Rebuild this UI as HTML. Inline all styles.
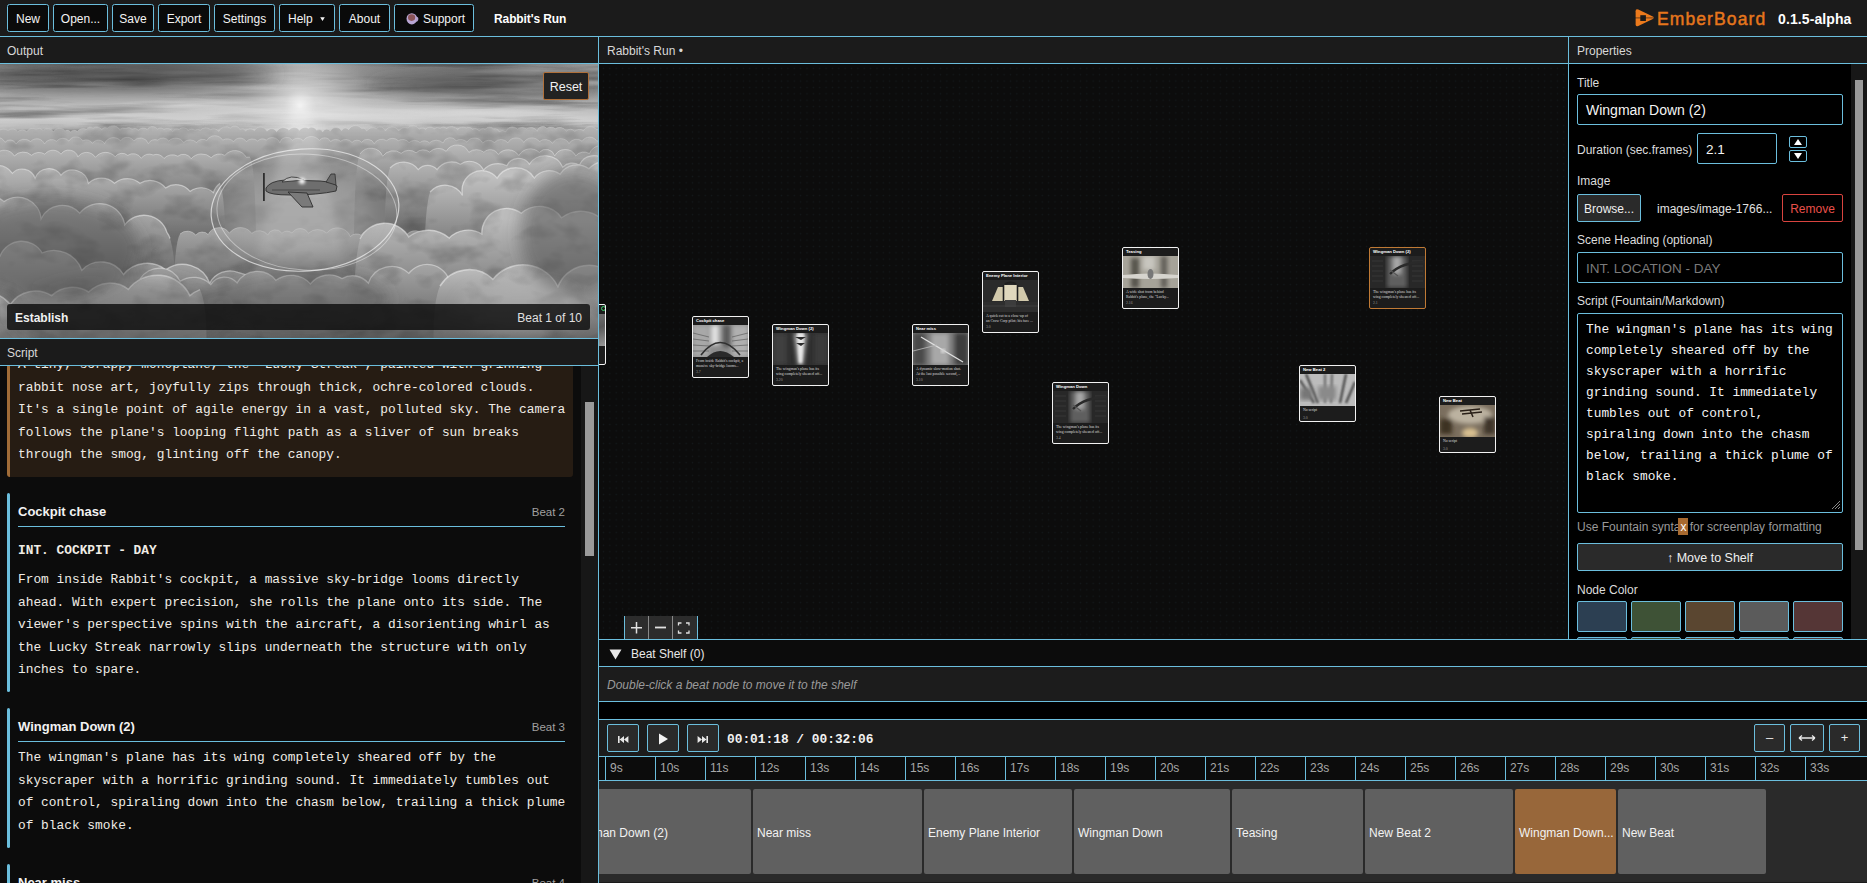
<!DOCTYPE html>
<html><head><meta charset="utf-8">
<style>
*{box-sizing:border-box;margin:0;padding:0}
html,body{width:1867px;height:883px;overflow:hidden;background:#1b1b1b;font-family:"Liberation Sans",sans-serif;color:#e8e8e8}
.a{position:absolute}
.bl{background:#6bbedd}
.mono{font-family:"Liberation Mono",monospace}
/* toolbar */
.tb{left:0;top:0;width:1867px;height:36px;background:#1b1b1b}
.btn{position:absolute;top:4px;height:28px;border:1px solid #6bbedd;border-radius:2.5px;background:#0a0a0a;color:#f4f4f4;font-size:12px;line-height:28px;text-align:center;white-space:nowrap}
.hdr{position:absolute;background:#1b1b1b;color:#d8d8d8;font-size:12px}
.st{font-size:12.85px;line-height:22.5px;white-space:pre;color:#f0ece6}
.ct{font-size:13px;font-weight:bold;color:#f2f2f2;white-space:nowrap}
.cb{font-size:11.5px;color:#a0a0a0;text-align:right}
.pl{font-size:12px;color:#dcdcdc;white-space:nowrap}
.inp{border:1px solid #6bbedd;border-radius:2px;background:#000;padding-left:8px;white-space:nowrap}
.spin{width:18px;border:1px solid #6bbedd;border-radius:2px;background:#000}
.pbtn{border:1px solid #6bbedd;border-radius:2px;background:#2a2a2a;color:#f0f0f0;font-size:12.5px;text-align:center;white-space:nowrap}
.sw{width:50px;height:31px;border:1px solid #6bbedd;border-radius:2px}
.tbtn{width:32px;height:28px;border:1px solid #6bbedd;border-radius:2px;background:#2a2a2a;overflow:hidden}
.tbtn svg{position:absolute;left:0;top:0}
.rl{position:absolute;top:4px;font-size:12px;color:#a8a8a8;white-space:nowrap}
.clip{top:8px;height:85px;background:#606060;border-radius:2px;color:#f2f2f2;font-size:12px;line-height:89px;padding-left:4px;white-space:nowrap;overflow:hidden}
.nd{width:57px;border:1px solid #f2f2f2;border-radius:2px;background:#1c1c1c;overflow:hidden}
.ndt{left:3px;top:0px;font-size:4.2px;font-weight:bold;color:#fff;white-space:nowrap;line-height:8px}
.ndi{left:0;width:55px}
.ndx{left:3px;font-size:3.8px;line-height:5px;color:#ddd;white-space:nowrap;font-family:"Liberation Serif",serif}
</style></head><body>
<!-- toolbar -->
<div class="a tb">
  <div class="btn" style="left:7px;width:42px">New</div>
  <div class="btn" style="left:53px;width:55px">Open...</div>
  <div class="btn" style="left:112px;width:42px">Save</div>
  <div class="btn" style="left:158px;width:52px">Export</div>
  <div class="btn" style="left:214px;width:61px">Settings</div>
  <div class="btn" style="left:279px;width:56px;text-align:left;padding-left:8px">Help <svg style="position:absolute;left:39px;top:11px" width="7" height="6"><path d="M1.2 1.2H5.8L3.5 5Z" fill="#f4f4f4"/></svg></div>
  <div class="btn" style="left:339px;width:51px">About</div>
  <div class="btn" style="left:394px;width:80px;text-align:left;padding-left:28px">Support
   <svg style="position:absolute;left:11px;top:7px" width="13" height="13" viewBox="0 0 13 13"><path d="M9.5 5.5 Q12.5 5 11.5 8 Q10.8 9.5 9 9" stroke="#b9a6d4" stroke-width="1.3" fill="none"/><ellipse cx="5.8" cy="6.8" rx="5.3" ry="5.6" fill="#b9a6d4"/><ellipse cx="5.6" cy="5.6" rx="3.6" ry="3.3" fill="#8a5458"/></svg></div>
  <div class="a" style="left:494px;top:12px;font-size:12px;letter-spacing:-0.1px;font-weight:bold;color:#fff;white-space:nowrap">Rabbit's Run</div>
  <svg class="a" style="left:1634px;top:8px" width="22" height="21" viewBox="0 0 22 21">
   <path d="M1.6 3.2 Q1.6 0.4 4.3 1.6 L18.8 8.4 Q21 9.6 18.8 10.9 L4.3 17.9 Q1.6 19.2 1.6 16.3Z" fill="#ec7a1c"/>
   <rect x="6.3" y="7.2" width="5.6" height="5.8" fill="#1b1b1b"/>
   <rect x="1" y="9.4" width="20" height="1" fill="#1b1b1b" fill-opacity="0.6"/>
  </svg>
  <div class="a" style="left:1657px;top:9px;font-size:17.5px;letter-spacing:1.1px;-webkit-text-stroke:0.45px #e6761c;color:#e6761c;white-space:nowrap">EmberBoard</div>
  <div class="a" style="left:1778px;top:11px;font-size:14px;letter-spacing:0.1px;font-weight:bold;color:#fff;white-space:nowrap">0.1.5-alpha</div>
</div>
<div class="a bl" style="left:0;top:36px;width:1867px;height:1px"></div>

<!-- left panel -->
<div class="hdr" style="left:0;top:37px;width:598px;height:26px"><span class="a" style="left:7px;top:7px">Output</span></div>
<div class="a bl" style="left:0;top:63px;width:598px;height:1px"></div>
<div class="a" id="outimg" style="left:0;top:64px;width:598px;height:274px;background:#8e8e8e;overflow:hidden">
<svg class="a" style="left:0;top:0" width="598" height="274" viewBox="0 0 598 274">
 <defs>
  <filter id="b8" x="-50%" y="-50%" width="200%" height="200%"><feGaussianBlur stdDeviation="8"/></filter>
  <filter id="b4" x="-50%" y="-50%" width="200%" height="200%"><feGaussianBlur stdDeviation="4"/></filter>
  <filter id="b2" x="-50%" y="-50%" width="200%" height="200%"><feGaussianBlur stdDeviation="1.4"/></filter>
  <filter id="b05" x="-5%" y="-5%" width="110%" height="110%"><feGaussianBlur stdDeviation="0.5"/></filter>
  <filter id="turbH" x="0" y="0" width="100%" height="100%">
   <feTurbulence type="fractalNoise" baseFrequency="0.006 0.09" numOctaves="4" seed="11" result="n"/>
   <feColorMatrix in="n" type="matrix" values="0 0 0 0 0  0 0 0 0 0  0 0 0 0 0  2.2 0 0 0 -1.0"/>
  </filter>
  <filter id="turbL" x="0" y="0" width="100%" height="100%">
   <feTurbulence type="fractalNoise" baseFrequency="0.006 0.09" numOctaves="3" seed="4" result="n"/>
   <feColorMatrix in="n" type="matrix" values="0 0 0 0 1  0 0 0 0 1  0 0 0 0 1  2.2 0 0 0 -1.05"/>
  </filter>
  <filter id="turbP" x="0" y="0" width="100%" height="100%">
   <feTurbulence type="fractalNoise" baseFrequency="0.03 0.05" numOctaves="3" seed="9" result="n"/>
   <feColorMatrix in="n" type="matrix" values="0 0 0 0 0  0 0 0 0 0  0 0 0 0 0  2.0 0 0 0 -0.95"/>
  </filter>
  <radialGradient id="sun" cx="300" cy="42" r="160" gradientUnits="userSpaceOnUse">
   <stop offset="0" stop-color="#ffffff" stop-opacity="0.95"/><stop offset="0.1" stop-color="#eeeeee" stop-opacity="0.7"/><stop offset="0.45" stop-color="#d0d0d0" stop-opacity="0.25"/><stop offset="1" stop-color="#a0a0a0" stop-opacity="0"/>
  </radialGradient>
  <linearGradient id="sky" x1="0" y1="0" x2="0" y2="1">
   <stop offset="0" stop-color="#7a7a7a"/><stop offset="0.1" stop-color="#969696"/><stop offset="0.15" stop-color="#b6b6b6"/><stop offset="0.2" stop-color="#cccccc"/><stop offset="0.24" stop-color="#b4b4b4"/><stop offset="0.4" stop-color="#a4a4a4"/><stop offset="1" stop-color="#8a8a8a"/>
  </linearGradient>
  <linearGradient id="ray" x1="0" y1="0" x2="0" y2="1">
   <stop offset="0" stop-color="#ffffff" stop-opacity="0.25"/><stop offset="1" stop-color="#ffffff" stop-opacity="0"/>
  </linearGradient>
  <clipPath id="topc"><rect x="0" y="0" width="598" height="110"/></clipPath>
  <linearGradient id="cg1" gradientUnits="userSpaceOnUse" x1="0" y1="61.2" x2="0" y2="86.0"><stop offset="0" stop-color="#b6b6b6"/><stop offset="1" stop-color="#989898"/></linearGradient>
<linearGradient id="cg2" gradientUnits="userSpaceOnUse" x1="0" y1="72.0" x2="0" y2="102.0"><stop offset="0" stop-color="#b4b4b4"/><stop offset="1" stop-color="#909090"/></linearGradient>
<linearGradient id="cg3" gradientUnits="userSpaceOnUse" x1="0" y1="83.6" x2="0" y2="132.0"><stop offset="0" stop-color="#b8b8b8"/><stop offset="1" stop-color="#7c7c7c"/></linearGradient>
<linearGradient id="cg4" gradientUnits="userSpaceOnUse" x1="0" y1="81.6" x2="0" y2="130.0"><stop offset="0" stop-color="#b8b8b8"/><stop offset="1" stop-color="#7c7c7c"/></linearGradient>
<linearGradient id="cg5" gradientUnits="userSpaceOnUse" x1="0" y1="100.0" x2="0" y2="172.0"><stop offset="0" stop-color="#bcbcbc"/><stop offset="1" stop-color="#6e6e6e"/></linearGradient>
<linearGradient id="cg6" gradientUnits="userSpaceOnUse" x1="0" y1="92.0" x2="0" y2="164.0"><stop offset="0" stop-color="#bcbcbc"/><stop offset="1" stop-color="#6e6e6e"/></linearGradient>
<linearGradient id="cg7" gradientUnits="userSpaceOnUse" x1="0" y1="161.6" x2="0" y2="210.0"><stop offset="0" stop-color="#a8a8a8"/><stop offset="1" stop-color="#767676"/></linearGradient>
<linearGradient id="cg8" gradientUnits="userSpaceOnUse" x1="0" y1="124.4" x2="0" y2="220.0"><stop offset="0" stop-color="#c0c0c0"/><stop offset="1" stop-color="#626262"/></linearGradient>
<linearGradient id="cg9" gradientUnits="userSpaceOnUse" x1="0" y1="112.4" x2="0" y2="208.0"><stop offset="0" stop-color="#c0c0c0"/><stop offset="1" stop-color="#626262"/></linearGradient>
<linearGradient id="cg10" gradientUnits="userSpaceOnUse" x1="0" y1="164.6" x2="0" y2="285.0"><stop offset="0" stop-color="#bcbcbc"/><stop offset="1" stop-color="#555555"/></linearGradient>
<linearGradient id="cg11" gradientUnits="userSpaceOnUse" x1="0" y1="154.6" x2="0" y2="275.0"><stop offset="0" stop-color="#bcbcbc"/><stop offset="1" stop-color="#585858"/></linearGradient>
<linearGradient id="cg12" gradientUnits="userSpaceOnUse" x1="0" y1="199.4" x2="0" y2="275.0"><stop offset="0" stop-color="#a6a6a6"/><stop offset="1" stop-color="#5e5e5e"/></linearGradient>
<linearGradient id="cg13" gradientUnits="userSpaceOnUse" x1="0" y1="211.0" x2="0" y2="295.0"><stop offset="0" stop-color="#bdbdbd"/><stop offset="1" stop-color="#5a5a5a"/></linearGradient>
<linearGradient id="cg14" gradientUnits="userSpaceOnUse" x1="0" y1="198.0" x2="0" y2="282.0"><stop offset="0" stop-color="#c4c4c4"/><stop offset="1" stop-color="#5e5e5e"/></linearGradient>
 </defs>
 <rect width="598" height="274" fill="url(#sky)"/>
 <g filter="url(#b8)">
  <ellipse cx="130" cy="6" rx="170" ry="14" fill="#626262"/>
  <ellipse cx="470" cy="18" rx="140" ry="12" fill="#686868"/>
 </g>
 <g clip-path="url(#topc)">
  <rect width="598" height="110" filter="url(#turbH)" opacity="0.45"/>
  <rect width="598" height="110" filter="url(#turbL)" opacity="0.4"/>
 </g>
 <rect width="598" height="274" fill="url(#sun)"/>
 <g filter="url(#b05)">
 <path d="M-26.0 290.0 Q-28.0 72.0 -20.0 66.0 A6.3 6.3 0 0 1 -10.1 67.3 A5.1 5.1 0 0 1 -2.0 67.6 A7.6 7.6 0 0 1 8.1 66.6 A6.5 6.5 0 0 1 17.8 67.9 A6.1 6.1 0 0 1 26.8 67.8 A6.5 6.5 0 0 1 35.8 65.2 A6.0 6.0 0 0 1 43.2 66.4 A6.9 6.9 0 0 1 53.3 67.4 A7.7 7.7 0 0 1 65.1 66.7 A4.5 4.5 0 0 1 70.6 67.9 A5.1 5.1 0 0 1 77.4 67.6 A7.0 7.0 0 0 1 86.3 65.3 A5.0 5.0 0 0 1 93.1 64.0 A6.1 6.1 0 0 1 101.6 65.6 A4.7 4.7 0 0 1 107.6 64.1 A7.5 7.5 0 0 1 119.9 66.2 A4.5 4.5 0 0 1 125.7 64.5 A5.3 5.3 0 0 1 132.2 65.1 A4.8 4.8 0 0 1 138.5 66.6 A5.8 5.8 0 0 1 147.2 65.4 A6.2 6.2 0 0 1 157.5 65.2 A4.3 4.3 0 0 1 163.8 65.5 A7.1 7.1 0 0 1 172.9 67.5 A4.1 4.1 0 0 1 179.1 65.8 A5.3 5.3 0 0 1 188.2 66.8 A4.7 4.7 0 0 1 195.1 66.4 A4.1 4.1 0 0 1 200.3 66.4 A6.9 6.9 0 0 1 210.5 65.7 A6.0 6.0 0 0 1 218.7 67.5 A7.8 7.8 0 0 1 230.4 64.1 A5.6 5.6 0 0 1 239.8 65.3 A4.4 4.4 0 0 1 245.6 66.8 A6.5 6.5 0 0 1 254.5 66.5 A7.0 7.0 0 0 1 267.0 67.3 A5.7 5.7 0 0 1 276.7 67.7 A7.5 7.5 0 0 1 289.0 66.3 A6.0 6.0 0 0 1 299.4 66.5 A6.9 6.9 0 0 1 308.6 64.4 A5.1 5.1 0 0 1 316.5 66.3 A4.8 4.8 0 0 1 322.8 67.8 A4.3 4.3 0 0 1 330.3 67.1 A6.3 6.3 0 0 1 341.6 66.7 A4.1 4.1 0 0 1 348.7 65.7 A7.7 7.7 0 0 1 361.6 64.6 A4.2 4.2 0 0 1 366.7 67.1 A7.2 7.2 0 0 1 376.3 64.5 A5.5 5.5 0 0 1 385.4 67.0 A7.5 7.5 0 0 1 398.7 67.0 A7.3 7.3 0 0 1 407.6 64.0 A7.4 7.4 0 0 1 419.3 65.3 A4.5 4.5 0 0 1 425.6 65.4 A6.0 6.0 0 0 1 434.4 64.8 A4.3 4.3 0 0 1 440.2 64.5 A4.4 4.4 0 0 1 446.5 64.5 A7.2 7.2 0 0 1 457.5 65.8 A6.6 6.6 0 0 1 466.3 64.1 A4.3 4.3 0 0 1 472.4 65.4 A5.0 5.0 0 0 1 479.3 67.3 A4.0 4.0 0 0 1 485.2 65.5 A5.1 5.1 0 0 1 493.6 64.9 A4.2 4.2 0 0 1 499.0 67.9 A5.4 5.4 0 0 1 505.9 67.9 A6.6 6.6 0 0 1 517.5 65.3 A7.2 7.2 0 0 1 526.4 65.0 A7.2 7.2 0 0 1 537.2 67.2 A5.5 5.5 0 0 1 546.8 64.3 A6.5 6.5 0 0 1 555.3 64.8 A7.5 7.5 0 0 1 566.3 67.3 A5.1 5.1 0 0 1 574.7 67.6 A6.5 6.5 0 0 1 583.5 66.7 A7.8 7.8 0 0 1 596.6 65.8 A5.6 5.6 0 0 1 603.6 67.1 A4.6 4.6 0 0 1 609.8 64.1 A4.7 4.7 0 0 1 616.4 65.9 A4.7 4.7 0 0 1 620.0 67.0 Q628.0 73.0 626.0 290.0 Z" fill="url(#cg1)"/><path d="M-20.0 66.0 A6.3 6.3 0 0 1 -10.1 67.3 A5.1 5.1 0 0 1 -2.0 67.6 A7.6 7.6 0 0 1 8.1 66.6 A6.5 6.5 0 0 1 17.8 67.9 A6.1 6.1 0 0 1 26.8 67.8 A6.5 6.5 0 0 1 35.8 65.2 A6.0 6.0 0 0 1 43.2 66.4 A6.9 6.9 0 0 1 53.3 67.4 A7.7 7.7 0 0 1 65.1 66.7 A4.5 4.5 0 0 1 70.6 67.9 A5.1 5.1 0 0 1 77.4 67.6 A7.0 7.0 0 0 1 86.3 65.3 A5.0 5.0 0 0 1 93.1 64.0 A6.1 6.1 0 0 1 101.6 65.6 A4.7 4.7 0 0 1 107.6 64.1 A7.5 7.5 0 0 1 119.9 66.2 A4.5 4.5 0 0 1 125.7 64.5 A5.3 5.3 0 0 1 132.2 65.1 A4.8 4.8 0 0 1 138.5 66.6 A5.8 5.8 0 0 1 147.2 65.4 A6.2 6.2 0 0 1 157.5 65.2 A4.3 4.3 0 0 1 163.8 65.5 A7.1 7.1 0 0 1 172.9 67.5 A4.1 4.1 0 0 1 179.1 65.8 A5.3 5.3 0 0 1 188.2 66.8 A4.7 4.7 0 0 1 195.1 66.4 A4.1 4.1 0 0 1 200.3 66.4 A6.9 6.9 0 0 1 210.5 65.7 A6.0 6.0 0 0 1 218.7 67.5 A7.8 7.8 0 0 1 230.4 64.1 A5.6 5.6 0 0 1 239.8 65.3 A4.4 4.4 0 0 1 245.6 66.8 A6.5 6.5 0 0 1 254.5 66.5 A7.0 7.0 0 0 1 267.0 67.3 A5.7 5.7 0 0 1 276.7 67.7 A7.5 7.5 0 0 1 289.0 66.3 A6.0 6.0 0 0 1 299.4 66.5 A6.9 6.9 0 0 1 308.6 64.4 A5.1 5.1 0 0 1 316.5 66.3 A4.8 4.8 0 0 1 322.8 67.8 A4.3 4.3 0 0 1 330.3 67.1 A6.3 6.3 0 0 1 341.6 66.7 A4.1 4.1 0 0 1 348.7 65.7 A7.7 7.7 0 0 1 361.6 64.6 A4.2 4.2 0 0 1 366.7 67.1 A7.2 7.2 0 0 1 376.3 64.5 A5.5 5.5 0 0 1 385.4 67.0 A7.5 7.5 0 0 1 398.7 67.0 A7.3 7.3 0 0 1 407.6 64.0 A7.4 7.4 0 0 1 419.3 65.3 A4.5 4.5 0 0 1 425.6 65.4 A6.0 6.0 0 0 1 434.4 64.8 A4.3 4.3 0 0 1 440.2 64.5 A4.4 4.4 0 0 1 446.5 64.5 A7.2 7.2 0 0 1 457.5 65.8 A6.6 6.6 0 0 1 466.3 64.1 A4.3 4.3 0 0 1 472.4 65.4 A5.0 5.0 0 0 1 479.3 67.3 A4.0 4.0 0 0 1 485.2 65.5 A5.1 5.1 0 0 1 493.6 64.9 A4.2 4.2 0 0 1 499.0 67.9 A5.4 5.4 0 0 1 505.9 67.9 A6.6 6.6 0 0 1 517.5 65.3 A7.2 7.2 0 0 1 526.4 65.0 A7.2 7.2 0 0 1 537.2 67.2 A5.5 5.5 0 0 1 546.8 64.3 A6.5 6.5 0 0 1 555.3 64.8 A7.5 7.5 0 0 1 566.3 67.3 A5.1 5.1 0 0 1 574.7 67.6 A6.5 6.5 0 0 1 583.5 66.7 A7.8 7.8 0 0 1 596.6 65.8 A5.6 5.6 0 0 1 603.6 67.1 A4.6 4.6 0 0 1 609.8 64.1 A4.7 4.7 0 0 1 616.4 65.9 A4.7 4.7 0 0 1 620.0 67.0 " fill="none" stroke="#f2f2f2" stroke-opacity="0.25" stroke-width="0.8"/>
<path d="M-26.0 290.0 Q-28.0 85.2 -20.0 78.0 A6.4 6.4 0 0 1 -11.8 78.1 A9.6 9.6 0 0 1 5.0 78.3 A6.4 6.4 0 0 1 16.0 80.0 A9.6 9.6 0 0 1 30.6 77.5 A8.3 8.3 0 0 1 44.5 80.0 A8.0 8.0 0 0 1 56.5 77.2 A8.2 8.2 0 0 1 69.0 77.1 A7.8 7.8 0 0 1 82.7 76.9 A7.0 7.0 0 0 1 92.4 79.4 A7.2 7.2 0 0 1 104.6 79.7 A9.5 9.5 0 0 1 120.6 76.8 A7.8 7.8 0 0 1 133.8 77.0 A8.4 8.4 0 0 1 148.3 79.7 A7.4 7.4 0 0 1 157.7 76.1 A7.3 7.3 0 0 1 168.8 77.1 A9.3 9.3 0 0 1 183.6 78.5 A9.3 9.3 0 0 1 196.6 78.6 A7.4 7.4 0 0 1 206.8 76.5 A9.2 9.2 0 0 1 222.7 76.1 A8.9 8.9 0 0 1 233.7 77.7 A7.3 7.3 0 0 1 246.3 77.7 A8.0 8.0 0 0 1 257.7 77.0 A7.0 7.0 0 0 1 266.3 76.1 A8.2 8.2 0 0 1 279.8 78.7 A7.0 7.0 0 0 1 292.4 76.3 A7.7 7.7 0 0 1 303.3 76.7 A9.8 9.8 0 0 1 319.3 76.5 A6.7 6.7 0 0 1 330.6 77.5 A7.2 7.2 0 0 1 340.5 77.3 A8.4 8.4 0 0 1 352.1 78.4 A6.3 6.3 0 0 1 361.6 78.3 A7.3 7.3 0 0 1 374.2 79.7 A8.6 8.6 0 0 1 386.6 76.7 A8.5 8.5 0 0 1 398.3 76.7 A8.1 8.1 0 0 1 409.0 78.6 A9.0 9.0 0 0 1 420.0 78.5 A6.8 6.8 0 0 1 429.4 78.9 A9.9 9.9 0 0 1 443.1 79.0 A7.4 7.4 0 0 1 456.2 76.7 A8.7 8.7 0 0 1 467.0 78.2 A9.0 9.0 0 0 1 482.7 79.1 A8.2 8.2 0 0 1 494.5 78.5 A8.6 8.6 0 0 1 507.9 78.9 A9.0 9.0 0 0 1 523.8 78.5 A9.5 9.5 0 0 1 539.4 77.5 A9.2 9.2 0 0 1 552.5 79.3 A9.5 9.5 0 0 1 569.0 79.6 A8.8 8.8 0 0 1 582.2 77.2 A8.6 8.6 0 0 1 597.0 77.4 A6.8 6.8 0 0 1 608.3 79.6 A6.8 6.8 0 0 1 617.1 76.4 A8.2 8.2 0 0 1 620.0 77.0 Q628.0 84.2 626.0 290.0 Z" fill="url(#cg2)"/><path d="M-20.0 78.0 A6.4 6.4 0 0 1 -11.8 78.1 A9.6 9.6 0 0 1 5.0 78.3 A6.4 6.4 0 0 1 16.0 80.0 A9.6 9.6 0 0 1 30.6 77.5 A8.3 8.3 0 0 1 44.5 80.0 A8.0 8.0 0 0 1 56.5 77.2 A8.2 8.2 0 0 1 69.0 77.1 A7.8 7.8 0 0 1 82.7 76.9 A7.0 7.0 0 0 1 92.4 79.4 A7.2 7.2 0 0 1 104.6 79.7 A9.5 9.5 0 0 1 120.6 76.8 A7.8 7.8 0 0 1 133.8 77.0 A8.4 8.4 0 0 1 148.3 79.7 A7.4 7.4 0 0 1 157.7 76.1 A7.3 7.3 0 0 1 168.8 77.1 A9.3 9.3 0 0 1 183.6 78.5 A9.3 9.3 0 0 1 196.6 78.6 A7.4 7.4 0 0 1 206.8 76.5 A9.2 9.2 0 0 1 222.7 76.1 A8.9 8.9 0 0 1 233.7 77.7 A7.3 7.3 0 0 1 246.3 77.7 A8.0 8.0 0 0 1 257.7 77.0 A7.0 7.0 0 0 1 266.3 76.1 A8.2 8.2 0 0 1 279.8 78.7 A7.0 7.0 0 0 1 292.4 76.3 A7.7 7.7 0 0 1 303.3 76.7 A9.8 9.8 0 0 1 319.3 76.5 A6.7 6.7 0 0 1 330.6 77.5 A7.2 7.2 0 0 1 340.5 77.3 A8.4 8.4 0 0 1 352.1 78.4 A6.3 6.3 0 0 1 361.6 78.3 A7.3 7.3 0 0 1 374.2 79.7 A8.6 8.6 0 0 1 386.6 76.7 A8.5 8.5 0 0 1 398.3 76.7 A8.1 8.1 0 0 1 409.0 78.6 A9.0 9.0 0 0 1 420.0 78.5 A6.8 6.8 0 0 1 429.4 78.9 A9.9 9.9 0 0 1 443.1 79.0 A7.4 7.4 0 0 1 456.2 76.7 A8.7 8.7 0 0 1 467.0 78.2 A9.0 9.0 0 0 1 482.7 79.1 A8.2 8.2 0 0 1 494.5 78.5 A8.6 8.6 0 0 1 507.9 78.9 A9.0 9.0 0 0 1 523.8 78.5 A9.5 9.5 0 0 1 539.4 77.5 A9.2 9.2 0 0 1 552.5 79.3 A9.5 9.5 0 0 1 569.0 79.6 A8.8 8.8 0 0 1 582.2 77.2 A8.6 8.6 0 0 1 597.0 77.4 A6.8 6.8 0 0 1 608.3 79.6 A6.8 6.8 0 0 1 617.1 76.4 A8.2 8.2 0 0 1 620.0 77.0 " fill="none" stroke="#f2f2f2" stroke-opacity="0.30" stroke-width="0.9"/>
<path d="M-26.0 290.0 Q-28.0 104.0 -20.0 92.0 A12.7 12.7 0 0 1 -4.3 90.3 A11.3 11.3 0 0 1 14.3 92.0 A12.1 12.1 0 0 1 31.5 91.3 A11.1 11.1 0 0 1 44.9 90.2 A10.1 10.1 0 0 1 61.0 90.2 A9.5 9.5 0 0 1 77.9 92.9 A10.5 10.5 0 0 1 95.4 93.3 A12.9 12.9 0 0 1 115.2 92.7 A8.6 8.6 0 0 1 127.7 91.4 A9.5 9.5 0 0 1 141.3 94.3 A9.3 9.3 0 0 1 153.1 91.0 A9.0 9.0 0 0 1 164.0 94.5 A11.3 11.3 0 0 1 177.8 92.2 A9.0 9.0 0 0 1 191.2 94.7 A13.9 13.9 0 0 1 211.2 93.7 A11.0 11.0 0 0 1 224.9 91.4 A12.9 12.9 0 0 1 246.3 93.3 A13.9 13.9 0 0 1 250.0 93.2 Q258.0 105.2 256.0 290.0 Z" fill="url(#cg3)"/><path d="M-20.0 92.0 A12.7 12.7 0 0 1 -4.3 90.3 A11.3 11.3 0 0 1 14.3 92.0 A12.1 12.1 0 0 1 31.5 91.3 A11.1 11.1 0 0 1 44.9 90.2 A10.1 10.1 0 0 1 61.0 90.2 A9.5 9.5 0 0 1 77.9 92.9 A10.5 10.5 0 0 1 95.4 93.3 A12.9 12.9 0 0 1 115.2 92.7 A8.6 8.6 0 0 1 127.7 91.4 A9.5 9.5 0 0 1 141.3 94.3 A9.3 9.3 0 0 1 153.1 91.0 A9.0 9.0 0 0 1 164.0 94.5 A11.3 11.3 0 0 1 177.8 92.2 A9.0 9.0 0 0 1 191.2 94.7 A13.9 13.9 0 0 1 211.2 93.7 A11.0 11.0 0 0 1 224.9 91.4 A12.9 12.9 0 0 1 246.3 93.3 A13.9 13.9 0 0 1 250.0 93.2 " fill="none" stroke="#f2f2f2" stroke-opacity="0.40" stroke-width="1.0"/>
<path d="M354.0 290.0 Q352.0 102.0 360.0 90.0 A12.9 12.9 0 0 1 382.7 92.2 A13.2 13.2 0 0 1 401.2 89.3 A11.7 11.7 0 0 1 416.1 88.8 A10.2 10.2 0 0 1 429.7 88.1 A11.9 11.9 0 0 1 446.2 87.3 A12.8 12.8 0 0 1 468.8 88.3 A12.1 12.1 0 0 1 483.9 88.3 A9.0 9.0 0 0 1 498.2 90.4 A12.9 12.9 0 0 1 518.8 91.5 A13.2 13.2 0 0 1 539.3 88.4 A9.0 9.0 0 0 1 554.7 91.9 A11.9 11.9 0 0 1 575.8 91.9 A10.4 10.4 0 0 1 589.4 89.6 A13.5 13.5 0 0 1 612.8 87.0 A8.0 8.0 0 0 1 620.0 92.5 Q628.0 104.5 626.0 290.0 Z" fill="url(#cg4)"/><path d="M360.0 90.0 A12.9 12.9 0 0 1 382.7 92.2 A13.2 13.2 0 0 1 401.2 89.3 A11.7 11.7 0 0 1 416.1 88.8 A10.2 10.2 0 0 1 429.7 88.1 A11.9 11.9 0 0 1 446.2 87.3 A12.8 12.8 0 0 1 468.8 88.3 A12.1 12.1 0 0 1 483.9 88.3 A9.0 9.0 0 0 1 498.2 90.4 A12.9 12.9 0 0 1 518.8 91.5 A13.2 13.2 0 0 1 539.3 88.4 A9.0 9.0 0 0 1 554.7 91.9 A11.9 11.9 0 0 1 575.8 91.9 A10.4 10.4 0 0 1 589.4 89.6 A13.5 13.5 0 0 1 612.8 87.0 A8.0 8.0 0 0 1 620.0 92.5 " fill="none" stroke="#f2f2f2" stroke-opacity="0.40" stroke-width="1.0"/>
<path d="M-26.0 290.0 Q-28.0 130.0 -20.0 112.0 A19.0 19.0 0 0 1 12.4 109.3 A13.6 13.6 0 0 1 35.1 114.2 A14.6 14.6 0 0 1 61.0 111.2 A15.9 15.9 0 0 1 88.4 119.4 A19.1 19.1 0 0 1 114.5 119.3 A19.8 19.8 0 0 1 139.9 119.3 A19.9 19.9 0 0 1 165.7 124.0 A18.0 18.0 0 0 1 190.1 127.4 A18.2 18.2 0 0 1 213.4 128.6 A19.1 19.1 0 0 1 220.0 119.3 Q228.0 137.3 226.0 290.0 Z" fill="url(#cg5)"/><path d="M-20.0 112.0 A19.0 19.0 0 0 1 12.4 109.3 A13.6 13.6 0 0 1 35.1 114.2 A14.6 14.6 0 0 1 61.0 111.2 A15.9 15.9 0 0 1 88.4 119.4 A19.1 19.1 0 0 1 114.5 119.3 A19.8 19.8 0 0 1 139.9 119.3 A19.9 19.9 0 0 1 165.7 124.0 A18.0 18.0 0 0 1 190.1 127.4 A18.2 18.2 0 0 1 213.4 128.6 A19.1 19.1 0 0 1 220.0 119.3 " fill="none" stroke="#f2f2f2" stroke-opacity="0.50" stroke-width="1.2"/>
<path d="M384.0 290.0 Q382.0 122.0 390.0 104.0 A18.3 18.3 0 0 1 418.3 105.6 A12.6 12.6 0 0 1 437.1 105.7 A17.8 17.8 0 0 1 460.4 100.2 A15.6 15.6 0 0 1 483.5 106.1 A19.5 19.5 0 0 1 506.8 101.7 A13.1 13.1 0 0 1 529.4 100.1 A19.2 19.2 0 0 1 562.8 103.2 A13.4 13.4 0 0 1 579.4 101.0 A15.7 15.7 0 0 1 605.6 97.0 A15.3 15.3 0 0 1 620.0 95.8 Q628.0 113.8 626.0 290.0 Z" fill="url(#cg6)"/><path d="M390.0 104.0 A18.3 18.3 0 0 1 418.3 105.6 A12.6 12.6 0 0 1 437.1 105.7 A17.8 17.8 0 0 1 460.4 100.2 A15.6 15.6 0 0 1 483.5 106.1 A19.5 19.5 0 0 1 506.8 101.7 A13.1 13.1 0 0 1 529.4 100.1 A19.2 19.2 0 0 1 562.8 103.2 A13.4 13.4 0 0 1 579.4 101.0 A15.7 15.7 0 0 1 605.6 97.0 A15.3 15.3 0 0 1 620.0 95.8 " fill="none" stroke="#f2f2f2" stroke-opacity="0.50" stroke-width="1.2"/>
<path d="M174.0 290.0 Q172.0 182.0 180.0 170.0 A11.0 11.0 0 0 1 195.8 171.0 A8.4 8.4 0 0 1 208.2 170.5 A12.1 12.1 0 0 1 229.3 169.2 A13.8 13.8 0 0 1 251.7 169.3 A11.4 11.4 0 0 1 267.8 170.9 A8.1 8.1 0 0 1 281.9 169.2 A8.1 8.1 0 0 1 292.0 169.0 A9.6 9.6 0 0 1 308.4 169.3 A13.5 13.5 0 0 1 326.8 169.1 A13.7 13.7 0 0 1 350.3 172.6 A8.7 8.7 0 0 1 361.1 171.2 A10.0 10.0 0 0 1 373.8 167.6 A9.9 9.9 0 0 1 387.5 171.0 A13.9 13.9 0 0 1 405.7 171.8 A11.6 11.6 0 0 1 425.6 173.0 A13.5 13.5 0 0 1 440.0 171.4 Q448.0 183.4 446.0 290.0 Z" fill="url(#cg7)"/><path d="M180.0 170.0 A11.0 11.0 0 0 1 195.8 171.0 A8.4 8.4 0 0 1 208.2 170.5 A12.1 12.1 0 0 1 229.3 169.2 A13.8 13.8 0 0 1 251.7 169.3 A11.4 11.4 0 0 1 267.8 170.9 A8.1 8.1 0 0 1 281.9 169.2 A8.1 8.1 0 0 1 292.0 169.0 A9.6 9.6 0 0 1 308.4 169.3 A13.5 13.5 0 0 1 326.8 169.1 A13.7 13.7 0 0 1 350.3 172.6 A8.7 8.7 0 0 1 361.1 171.2 A10.0 10.0 0 0 1 373.8 167.6 A9.9 9.9 0 0 1 387.5 171.0 A13.9 13.9 0 0 1 405.7 171.8 A11.6 11.6 0 0 1 425.6 173.0 A13.5 13.5 0 0 1 440.0 171.4 " fill="none" stroke="#f2f2f2" stroke-opacity="0.35" stroke-width="1.0"/>
<path d="M-36.0 290.0 Q-38.0 164.0 -30.0 140.0 A23.7 23.7 0 0 1 3.9 137.6 A23.6 23.6 0 0 1 41.1 154.8 A23.6 23.6 0 0 1 79.8 149.2 A25.4 25.4 0 0 1 124.8 160.9 A23.9 23.9 0 0 1 166.9 168.4 A19.4 19.4 0 0 1 170.0 174.5 Q178.0 198.5 176.0 290.0 Z" fill="url(#cg8)"/><path d="M-30.0 140.0 A23.7 23.7 0 0 1 3.9 137.6 A23.6 23.6 0 0 1 41.1 154.8 A23.6 23.6 0 0 1 79.8 149.2 A25.4 25.4 0 0 1 124.8 160.9 A23.9 23.9 0 0 1 166.9 168.4 A19.4 19.4 0 0 1 170.0 174.5 " fill="none" stroke="#f2f2f2" stroke-opacity="0.55" stroke-width="1.3"/>
<path d="M424.0 290.0 Q422.0 152.0 430.0 128.0 A20.1 20.1 0 0 1 462.6 131.4 A19.7 19.7 0 0 1 497.1 114.2 A21.9 21.9 0 0 1 534.3 114.0 A18.8 18.8 0 0 1 560.1 110.2 A19.9 19.9 0 0 1 588.9 104.8 A22.0 22.0 0 0 1 618.2 101.6 A20.7 20.7 0 0 1 630.0 100.4 Q638.0 124.4 636.0 290.0 Z" fill="url(#cg9)"/><path d="M430.0 128.0 A20.1 20.1 0 0 1 462.6 131.4 A19.7 19.7 0 0 1 497.1 114.2 A21.9 21.9 0 0 1 534.3 114.0 A18.8 18.8 0 0 1 560.1 110.2 A19.9 19.9 0 0 1 588.9 104.8 A22.0 22.0 0 0 1 618.2 101.6 A20.7 20.7 0 0 1 630.0 100.4 " fill="none" stroke="#f2f2f2" stroke-opacity="0.55" stroke-width="1.3"/>
<path d="M-46.0 290.0 Q-48.0 215.0 -40.0 185.0 A24.2 24.2 0 0 1 0.3 191.5 A23.4 23.4 0 0 1 42.1 188.9 A29.6 29.6 0 0 1 81.8 206.2 A26.4 26.4 0 0 1 123.5 210.5 A30.4 30.4 0 0 1 165.7 205.7 A29.0 29.0 0 0 1 209.7 219.2 A22.8 22.8 0 0 1 237.9 208.4 A31.7 31.7 0 0 1 260.0 226.0 Q268.0 256.0 266.0 290.0 Z" fill="url(#cg10)"/><path d="M-40.0 185.0 A24.2 24.2 0 0 1 0.3 191.5 A23.4 23.4 0 0 1 42.1 188.9 A29.6 29.6 0 0 1 81.8 206.2 A26.4 26.4 0 0 1 123.5 210.5 A30.4 30.4 0 0 1 165.7 205.7 A29.0 29.0 0 0 1 209.7 219.2 A22.8 22.8 0 0 1 237.9 208.4 A31.7 31.7 0 0 1 260.0 226.0 " fill="none" stroke="#f2f2f2" stroke-opacity="0.55" stroke-width="1.4"/>
<path d="M354.0 290.0 Q352.0 205.0 360.0 175.0 A27.5 27.5 0 0 1 408.7 172.9 A32.2 32.2 0 0 1 449.2 174.0 A26.6 26.6 0 0 1 481.8 170.0 A24.8 24.8 0 0 1 521.3 149.2 A27.3 27.3 0 0 1 561.6 153.8 A31.9 31.9 0 0 1 605.4 158.7 A23.9 23.9 0 0 1 640.0 142.7 Q648.0 172.7 646.0 290.0 Z" fill="url(#cg11)"/><path d="M360.0 175.0 A27.5 27.5 0 0 1 408.7 172.9 A32.2 32.2 0 0 1 449.2 174.0 A26.6 26.6 0 0 1 481.8 170.0 A24.8 24.8 0 0 1 521.3 149.2 A27.3 27.3 0 0 1 561.6 153.8 A31.9 31.9 0 0 1 605.4 158.7 A23.9 23.9 0 0 1 640.0 142.7 " fill="none" stroke="#f2f2f2" stroke-opacity="0.55" stroke-width="1.4"/>
<path d="M134.0 290.0 Q132.0 233.0 140.0 215.0 A22.8 22.8 0 0 1 180.1 217.2 A24.5 24.5 0 0 1 210.8 220.6 A16.4 16.4 0 0 1 237.1 218.9 A23.7 23.7 0 0 1 275.9 216.3 A25.9 25.9 0 0 1 310.4 219.9 A24.1 24.1 0 0 1 342.0 214.6 A20.4 20.4 0 0 1 368.3 219.2 A24.6 24.6 0 0 1 408.8 209.4 A23.3 23.3 0 0 1 449.7 217.6 A25.3 25.3 0 0 1 470.0 217.4 Q478.0 235.4 476.0 290.0 Z" fill="url(#cg12)"/><path d="M140.0 215.0 A22.8 22.8 0 0 1 180.1 217.2 A24.5 24.5 0 0 1 210.8 220.6 A16.4 16.4 0 0 1 237.1 218.9 A23.7 23.7 0 0 1 275.9 216.3 A25.9 25.9 0 0 1 310.4 219.9 A24.1 24.1 0 0 1 342.0 214.6 A20.4 20.4 0 0 1 368.3 219.2 A24.6 24.6 0 0 1 408.8 209.4 A23.3 23.3 0 0 1 449.7 217.6 A25.3 25.3 0 0 1 470.0 217.4 " fill="none" stroke="#f2f2f2" stroke-opacity="0.45" stroke-width="1.3"/>
<path d="M-46.0 290.0 Q-48.0 253.0 -40.0 235.0 A36.4 36.4 0 0 1 10.3 240.4 A30.4 30.4 0 0 1 51.6 231.6 A30.3 30.3 0 0 1 88.7 228.0 A29.9 29.9 0 0 1 128.4 225.4 A36.3 36.3 0 0 1 189.9 231.6 A36.0 36.0 0 0 1 200.0 225.6 Q208.0 243.6 206.0 290.0 Z" fill="url(#cg13)"/><path d="M-40.0 235.0 A36.4 36.4 0 0 1 10.3 240.4 A30.4 30.4 0 0 1 51.6 231.6 A30.3 30.3 0 0 1 88.7 228.0 A29.9 29.9 0 0 1 128.4 225.4 A36.3 36.3 0 0 1 189.9 231.6 A36.0 36.0 0 0 1 200.0 225.6 " fill="none" stroke="#f2f2f2" stroke-opacity="0.55" stroke-width="1.5"/>
<path d="M434.0 290.0 Q432.0 240.0 440.0 222.0 A34.0 34.0 0 0 1 492.9 215.4 A38.6 38.6 0 0 1 557.9 222.7 A33.5 33.5 0 0 1 614.8 213.1 A38.3 38.3 0 0 1 640.0 218.1 Q648.0 236.1 646.0 290.0 Z" fill="url(#cg14)"/><path d="M440.0 222.0 A34.0 34.0 0 0 1 492.9 215.4 A38.6 38.6 0 0 1 557.9 222.7 A33.5 33.5 0 0 1 614.8 213.1 A38.3 38.3 0 0 1 640.0 218.1 " fill="none" stroke="#f2f2f2" stroke-opacity="0.55" stroke-width="1.5"/>
 </g>
 <rect x="0" y="60" width="598" height="214" filter="url(#turbP)" opacity="0.22"/>
 <g filter="url(#b8)">
  <ellipse cx="50" cy="185" rx="90" ry="50" fill="#4a4a4a" fill-opacity="0.5"/>
  <ellipse cx="575" cy="170" rx="55" ry="65" fill="#4a4a4a" fill-opacity="0.5"/>
  <ellipse cx="300" cy="150" rx="70" ry="40" fill="#a8a8a8" fill-opacity="0.5"/>
  <ellipse cx="300" cy="235" rx="90" ry="30" fill="#4a4a4a" fill-opacity="0.35"/>
  <ellipse cx="120" cy="250" rx="110" ry="40" fill="#505050" fill-opacity="0.3"/>
  <ellipse cx="520" cy="245" rx="60" ry="25" fill="#d0d0d0" fill-opacity="0.3"/>
  <ellipse cx="130" cy="10" rx="150" ry="10" fill="#4a4a4a" fill-opacity="0.5"/>
  <ellipse cx="480" cy="22" rx="110" ry="9" fill="#4a4a4a" fill-opacity="0.4"/>
  <ellipse cx="300" cy="50" rx="250" ry="6" fill="#dddddd" fill-opacity="0.6"/>
 </g>
 <g filter="url(#b4)">
  <path d="M288 50 L312 50 L360 274 L240 274Z" fill="url(#ray)"/>
 </g>
 <ellipse cx="305" cy="146" rx="94" ry="61" fill="none" stroke="#f4f4f4" stroke-opacity="0.7" stroke-width="1.2" transform="rotate(-4 305 146)"/>
 <ellipse cx="307" cy="148" rx="90" ry="58" fill="none" stroke="#f4f4f4" stroke-opacity="0.45" stroke-width="1" transform="rotate(3 305 146)"/>
 <g>
  <ellipse cx="300" cy="124" rx="26" ry="5" fill="#ffffff" fill-opacity="0.25" filter="url(#b4)"/>
  <path d="M266 124 Q270 117 285 116 L320 117 Q333 118 337 122 L336 127 Q318 131 290 131 Q270 131 266 127Z" fill="#6e6e6e" stroke="#2e2e2e" stroke-width="0.9"/>
  <path d="M282 118 Q290 109 304 116Z" fill="#b8b8b8" stroke="#2e2e2e" stroke-width="0.8"/>
  <path d="M288 128 L302 143 L313 143 L307 129Z" fill="#7a7a7a" stroke="#2e2e2e" stroke-width="0.9"/>
  <path d="M326 118 L331 110 L335 110 L336 121Z" fill="#6a6a6a" stroke="#2e2e2e" stroke-width="0.8"/>
  <rect x="263" y="109" width="1.8" height="28" fill="#2e2e2e"/>
  <path d="M272 126H320" stroke="#3a3a3a" stroke-width="0.7"/>
  <circle cx="302" cy="117" r="3.2" fill="#ffffff" fill-opacity="0.9" filter="url(#b2)"/>
 </g>
</svg>
 <div class="a" style="left:543px;top:8px;width:46px;height:28px;background:#222;border:1px solid #b0703a;border-radius:2px;color:#f2f2f2;font-size:12.5px;line-height:28px;text-align:center">Reset</div>
 <div class="a" style="left:7px;top:240px;width:583px;height:26px;background:rgba(14,14,14,0.82);border-radius:3px">
  <div class="a" style="left:8px;top:7px;font-size:12px;font-weight:bold;color:#f0f0f0">Establish</div>
  <div class="a" style="right:8px;top:7px;font-size:12px;color:#e0e0e0;white-space:nowrap">Beat 1 of 10</div>
 </div>
</div>
<div class="a bl" style="left:0;top:338px;width:598px;height:1px"></div>
<div class="hdr" style="left:0;top:339px;width:598px;height:26px"><span class="a" style="left:7px;top:7px">Script</span></div>
<div class="a bl" style="left:0;top:365px;width:598px;height:1px"></div>
<div class="a" id="script" style="left:0;top:366px;width:598px;height:517px;background:#0c0c0c;overflow:hidden">
 <div class="a" style="left:7px;top:-200px;width:566px;height:311px;background:#261c13;border-left:3px solid #a06c38;border-radius:3px"></div>
 <div class="a mono st" style="left:18px;top:-12px">A tiny, scrappy monoplane, the "Lucky Streak", painted with grinning
rabbit nose art, joyfully zips through thick, ochre-colored clouds.
It's a single point of agile energy in a vast, polluted sky. The camera
follows the plane's looping flight path as a sliver of sun breaks
through the smog, glinting off the canopy.</div>

 <div class="a" style="left:7px;top:127px;width:3px;height:199px;background:#6bbedd;border-radius:2px"></div>
 <div class="a ct" style="left:18px;top:138px">Cockpit chase</div>
 <div class="a cb" style="left:465px;top:140px;width:100px">Beat 2</div>
 <div class="a bl" style="left:18px;top:160px;width:547px;height:1px"></div>
 <div class="a mono st" style="left:18px;top:174px;font-weight:bold">INT. COCKPIT - DAY</div>
 <div class="a mono st" style="left:18px;top:203px">From inside Rabbit's cockpit, a massive sky-bridge looms directly
ahead. With expert precision, she rolls the plane onto its side. The
viewer's perspective spins with the aircraft, a disorienting whirl as
the Lucky Streak narrowly slips underneath the structure with only
inches to spare.</div>

 <div class="a" style="left:7px;top:342px;width:3px;height:140px;background:#6bbedd;border-radius:2px"></div>
 <div class="a ct" style="left:18px;top:353px">Wingman Down (2)</div>
 <div class="a cb" style="left:465px;top:355px;width:100px">Beat 3</div>
 <div class="a bl" style="left:18px;top:375px;width:547px;height:1px"></div>
 <div class="a mono st" style="left:18px;top:381px">The wingman's plane has its wing completely sheared off by the
skyscraper with a horrific grinding sound. It immediately tumbles out
of control, spiraling down into the chasm below, trailing a thick plume
of black smoke.</div>

 <div class="a" style="left:7px;top:498px;width:3px;height:40px;background:#6bbedd;border-radius:2px"></div>
 <div class="a ct" style="left:18px;top:509px">Near miss</div>
 <div class="a cb" style="left:465px;top:511px;width:100px">Beat 4</div>

 <div class="a" style="left:581px;top:0;width:17px;height:517px;background:#171717"></div>
 <div class="a" style="left:585px;top:36px;width:9px;height:154px;background:#9a9a9a"></div>
</div>

<!-- vertical borders -->
<div class="a bl" style="left:598px;top:36px;width:1px;height:847px"></div>
<div class="a bl" style="left:1568px;top:36px;width:1px;height:603px"></div>

<!-- center -->
<div class="hdr" style="left:599px;top:37px;width:969px;height:26px"><span class="a" style="left:8px;top:7px">Rabbit's Run &#8226;</span></div>
<div class="a bl" style="left:599px;top:63px;width:1268px;height:1px"></div>
<div class="a" id="canvas" style="left:599px;top:64px;width:969px;height:575px;background-color:#0c0c0c;background-image:radial-gradient(circle at 50% 50%, #13181b 0.6px, rgba(0,0,0,0) 1px);background-size:6.36px 6.36px;background-position:1.3px 1.2px;overflow:hidden">
<svg width="0" height="0" style="position:absolute"><defs><filter id="nb1"><feGaussianBlur stdDeviation="0.8"/></filter><filter id="nb2"><feGaussianBlur stdDeviation="2"/></filter></defs></svg>
<div class="a" style="left:-50px;top:240px;width:57px;height:61px;border:1px solid #f2f2f2;border-radius:2px;background:#1c1c1c;overflow:hidden"><div class="a" style="left:0;top:9px;width:56px;height:32px;background:linear-gradient(160deg,#8a8a8a,#5a5a5a 60%,#9a9a9a)"></div><div class="a" style="left:51px;top:1px;width:5px;height:5px;border-radius:50%;border:1.3px solid #3fd070;background:#1c1c1c"></div></div>
<div class="a nd" style="left:93px;top:252px;height:62px;border-color:#f2f2f2"><div class="a ndt">Cockpit chase</div><svg class="a" style="left:0;top:8px" width="55" height="32" viewBox="0 0 55 32" preserveAspectRatio="none"><rect width="55" height="32" fill="#8c8c8c"/>
<g filter="url(#nb2)"><rect x="0" y="0" width="16" height="32" fill="#a8a8a8"/><rect x="39" y="0" width="16" height="32" fill="#b0b0b0"/><rect x="18" y="0" width="8" height="20" fill="#e0e0e0"/><rect x="30" y="0" width="8" height="22" fill="#5a5a5a"/></g>
<g stroke="#505050" stroke-width="0.6"><path d="M0 8L16 12M0 14L16 16M0 20L16 21M0 26L16 26M55 8L39 12M55 14L39 16M55 20L39 21M55 26L39 26"/></g>
<path d="M8 30 Q27 5 47 30" stroke="#303030" stroke-width="1.6" fill="none"/>
<path d="M14 32 Q27 20 41 32Z" fill="#2a2a2a"/></svg><div class="a ndx" style="top:42px">From inside Rabbit's cockpit, a<br>massive sky-bridge looms...<div style="color:#999;margin-top:1px">3.7</div></div></div>
<div class="a nd" style="left:173px;top:260px;height:62px;border-color:#f2f2f2"><div class="a ndt">Wingman Down (2)</div><svg class="a" style="left:0;top:8px" width="55" height="32" viewBox="0 0 55 32" preserveAspectRatio="none"><rect width="55" height="32" fill="#2e2e2e"/>
<g filter="url(#nb2)"><path d="M21 0H34L30 32H25Z" fill="#bdbdbd"/><rect x="0" y="0" width="14" height="32" fill="#404040"/><rect x="41" y="0" width="14" height="32" fill="#3a3a3a"/></g>
<path d="M24 0H31L29 30H26Z" fill="#e8e8e8" filter="url(#nb1)"/>
<g fill="#2a2a2a"><path d="M22 4H33L28 7Z"/><path d="M23 10H32L28 13Z"/></g></svg><div class="a ndx" style="top:42px">The wingman's plane has its<br>wing completely sheared off...<div style="color:#999;margin-top:1px">3.20</div></div></div>
<div class="a nd" style="left:313px;top:260px;height:62px;border-color:#f2f2f2"><div class="a ndt">Near miss</div><svg class="a" style="left:0;top:8px" width="55" height="32" viewBox="0 0 55 32" preserveAspectRatio="none"><rect width="55" height="32" fill="#777"/>
<g filter="url(#nb2)"><rect x="0" y="0" width="12" height="32" fill="#4a4a4a"/><rect x="18" y="0" width="18" height="32" fill="#a8a8a8"/><rect x="42" y="0" width="13" height="32" fill="#3e3e3e"/></g>
<path d="M8 4L50 29" stroke="#e0e0e0" stroke-width="1.4"/><path d="M0 18L24 12" stroke="#bdbdbd" stroke-width="0.8"/>
<circle cx="30" cy="18" r="2.5" fill="#d0d0d0" filter="url(#nb1)"/></svg><div class="a ndx" style="top:42px">A dynamic slow-motion shot.<br>At the last possible second,...<div style="color:#999;margin-top:1px">3.10</div></div></div>
<div class="a nd" style="left:383px;top:207px;height:62px;border-color:#f2f2f2"><div class="a ndt">Enemy Plane Interior</div><svg class="a" style="left:0;top:8px" width="55" height="32" viewBox="0 0 55 32" preserveAspectRatio="none"><rect width="55" height="32" fill="#2a2a2a"/>
<path d="M9 21L15 7H22L21 21Z" fill="#d2c9ab"/>
<path d="M46 21L40 7H33L34 21Z" fill="#d2c9ab"/>
<path d="M21 5H34L35 21H20Z" fill="#e0d8bd"/>
<path d="M22 4Q27.5 1 33 4" stroke="#1e1e1e" stroke-width="2" fill="none"/>
<path d="M20.5 5V21M34.5 5V21" stroke="#1e1e1e" stroke-width="1.6"/>
<rect x="0" y="22" width="55" height="10" fill="#2e2e2e"/><rect x="22" y="20" width="11" height="7" fill="#3c3c3c"/>
<path d="M0 26H55" stroke="#444" stroke-width="0.8"/></svg><div class="a ndx" style="top:42px">A quick cut to a close-up of<br>an Crow Corp pilot; his face ...<div style="color:#999;margin-top:1px">3.0</div></div></div>
<div class="a nd" style="left:453px;top:318px;height:62px;border-color:#f2f2f2"><div class="a ndt">Wingman Down</div><svg class="a" style="left:0;top:8px" width="55" height="32" viewBox="0 0 55 32" preserveAspectRatio="none"><rect width="55" height="32" fill="#282828"/>
<g filter="url(#nb2)"><rect x="17" y="0" width="20" height="32" fill="#5e5e5e"/><rect x="23" y="0" width="8" height="18" fill="#a8a8a8"/></g>
<g stroke="#3e3e3e" stroke-width="0.7"><path d="M2 5H13M2 10H13M2 15H13M2 20H13M2 25H13M42 5H53M42 10H53M42 15H53M42 20H53M42 25H53"/></g>
<path d="M20 18 Q32 6 55 6" stroke="#2a2a2a" stroke-width="2.4" fill="none"/>
<path d="M20 14L28 20" stroke="#555" stroke-width="1.2"/></svg><div class="a ndx" style="top:42px">The wingman's plane has its<br>wing completely sheared off...<div style="color:#999;margin-top:1px">3.4</div></div></div>
<div class="a nd" style="left:523px;top:183px;height:62px;border-color:#f2f2f2"><div class="a ndt">Teasing</div><svg class="a" style="left:0;top:8px" width="55" height="32" viewBox="0 0 55 32" preserveAspectRatio="none"><rect width="55" height="32" fill="#a6a399"/>
<g filter="url(#nb2)"><rect x="8" y="2" width="8" height="30" fill="#55534c"/><rect x="38" y="0" width="6" height="32" fill="#5e5c55"/><rect x="20" y="0" width="12" height="14" fill="#c8c6bf"/></g>
<path d="M0 19 Q27 16 55 19 L55 22 Q27 24 0 22Z" fill="#d6d4ce"/>
<ellipse cx="27.5" cy="18" rx="3" ry="5" fill="#777"/></svg><div class="a ndx" style="top:42px">A wide shot from behind<br>Rabbit's plane, the "Lucky...<div style="color:#999;margin-top:1px">2.16</div></div></div>
<div class="a nd" style="left:700px;top:301px;height:57px;border-color:#f2f2f2"><div class="a ndt">New Beat 2</div><svg class="a" style="left:0;top:8px" width="55" height="32" viewBox="0 0 55 32" preserveAspectRatio="none"><rect width="55" height="32" fill="#bcbcbc"/>
<g filter="url(#nb1)" stroke-width="2.2"><path d="M0 6L14 29M6 0L18 29M46 0L40 29M55 8L46 29" stroke="#404040"/><path d="M25 0L25 29M32 0L31 29" stroke="#6a6a6a"/></g>
<g filter="url(#nb2)"><rect x="18" y="12" width="18" height="14" fill="#8a8a8a"/><rect x="0" y="14" width="12" height="12" fill="#777"/></g></svg><div class="a ndx" style="top:42px">No script<div style="color:#999;margin-top:3px">3.0</div></div></div>
<div class="a nd" style="left:770px;top:183px;height:62px;border-color:#c07a35"><div class="a ndt">Wingman Down (2)</div><svg class="a" style="left:0;top:8px" width="55" height="32" viewBox="0 0 55 32" preserveAspectRatio="none"><rect width="55" height="32" fill="#282828"/>
<g filter="url(#nb2)"><rect x="17" y="0" width="20" height="32" fill="#5e5e5e"/><rect x="23" y="0" width="8" height="18" fill="#a8a8a8"/></g>
<g stroke="#3e3e3e" stroke-width="0.7"><path d="M2 5H13M2 10H13M2 15H13M2 20H13M2 25H13M42 5H53M42 10H53M42 15H53M42 20H53M42 25H53"/></g>
<path d="M20 18 Q32 6 55 6" stroke="#2a2a2a" stroke-width="2.4" fill="none"/>
<path d="M20 14L28 20" stroke="#555" stroke-width="1.2"/></svg><div class="a ndx" style="top:42px">The wingman's plane has its<br>wing completely sheared off...<div style="color:#999;margin-top:1px">2.1</div></div></div>
<div class="a nd" style="left:840px;top:332px;height:57px;border-color:#f2f2f2"><div class="a ndt">New Beat</div><svg class="a" style="left:0;top:8px" width="55" height="32" viewBox="0 0 55 32" preserveAspectRatio="none"><rect width="55" height="32" fill="#7a6e5e"/>
<g filter="url(#nb2)"><ellipse cx="30" cy="10" rx="22" ry="9" fill="#bcb2a0"/><ellipse cx="30" cy="28" rx="8" ry="5" fill="#d8c090"/><rect x="0" y="14" width="12" height="15" fill="#3e3224"/><rect x="44" y="12" width="11" height="17" fill="#40342a"/></g>
<path d="M20 6L40 4M22 9L42 7" stroke="#2a2018" stroke-width="1.3"/><path d="M30 5L33 12" stroke="#2a2018" stroke-width="1.5"/></svg><div class="a ndx" style="top:42px">No script<div style="color:#999;margin-top:3px">3.0</div></div></div>
<div class="a" style="left:25px;top:552px;width:74px;height:23px;background:#2c2c2c;border-left:1px solid #6bbedd;border-right:1px solid #6bbedd">
 <div class="a" style="left:23px;top:0;width:1px;height:23px;background:#8a8a8a"></div>
 <div class="a" style="left:47px;top:0;width:1px;height:23px;background:#8a8a8a"></div>
 <svg class="a" style="left:0;top:0" width="72" height="23"><path d="M11.5 6V17.5M6 11.8H17" stroke="#e0e0e0" stroke-width="1.5"/><path d="M30 11.5H41" stroke="#e0e0e0" stroke-width="1.8"/><path d="M53.5 9.5V7h3M61 7h3v2.5M64 14.5V17h-3M56.5 17h-3v-2.5" stroke="#e0e0e0" stroke-width="1.3" fill="none"/></svg>
</div>
</div>

<!-- right -->
<div class="hdr" style="left:1569px;top:37px;width:298px;height:26px"><span class="a" style="left:8px;top:7px">Properties</span></div>
<div class="a" id="props" style="left:1569px;top:64px;width:298px;height:575px;background:#000;overflow:hidden">
 <div class="a pl" style="left:8px;top:12px">Title</div>
 <div class="a inp" style="left:8px;top:30px;width:266px;height:31px;font-size:14px;line-height:31px;color:#f4f4f4">Wingman Down (2)</div>
 <div class="a pl" style="left:8px;top:79px">Duration (sec.frames)</div>
 <div class="a inp" style="left:128px;top:69px;width:80px;height:31px;font-size:13.5px;line-height:31px;color:#f4f4f4">2.1</div>
 <div class="a spin" style="left:220px;top:72px;height:12px"><svg class="a" style="left:0;top:0" width="16" height="10" viewBox="0 0 16 10"><path d="M4 8 L8 2 L12 8Z" fill="#fff"/></svg></div>
 <div class="a spin" style="left:220px;top:86px;height:12px"><svg class="a" style="left:0;top:0" width="16" height="10" viewBox="0 0 16 10"><path d="M4 2 L8 8 L12 2Z" fill="#fff"/></svg></div>
 <div class="a pl" style="left:8px;top:110px">Image</div>
 <div class="a pbtn" style="left:8px;top:130px;width:64px;height:28px;line-height:28px;font-size:12px">Browse...</div>
 <div class="a" style="left:88px;top:138px;font-size:12px;color:#e0e0e0;white-space:nowrap">images/image-1766...</div>
 <div class="a" style="left:213px;top:130px;width:61px;height:28px;border:1px solid #d9443f;border-radius:2px;color:#e8504a;font-size:12px;line-height:28px;text-align:center">Remove</div>
 <div class="a pl" style="left:8px;top:169px">Scene Heading (optional)</div>
 <div class="a inp" style="left:8px;top:188px;width:266px;height:31px;font-size:13.5px;line-height:31px;color:#7a7a7a">INT. LOCATION - DAY</div>
 <div class="a pl" style="left:8px;top:230px">Script (Fountain/Markdown)</div>
 <div class="a inp" style="left:8px;top:249px;width:266px;height:200px;padding:0"></div>
 <div class="a mono" style="left:17px;top:255px;font-size:12.85px;line-height:21px;white-space:pre;color:#f4f4f4">The wingman's plane has its wing
completely sheared off by the
skyscraper with a horrific
grinding sound. It immediately
tumbles out of control,
spiraling down into the chasm
below, trailing a thick plume of
black smoke.</div>
 <svg class="a" style="left:262px;top:436px" width="10" height="10"><path d="M9 1L1 9M9 4L4 9M9 7L7 9" stroke="#888" stroke-width="1"/></svg>
 <div class="a" style="left:8px;top:456px;font-size:12px;color:#9a9a9a;white-space:nowrap">Use Fountain synta<span style="background:#a86a30;color:#fff;padding:2px 1.5px 1px 2px;margin:0 -1.5px 0 -2px">x</span> for screenplay formatting</div>
 <div class="a pbtn" style="left:8px;top:479px;width:266px;height:28px;line-height:28px;font-size:12.5px">&#8593; Move to Shelf</div>
 <div class="a pl" style="left:8px;top:519px">Node Color</div>
 <div class="a sw" style="left:8px;top:537px;background:#2c3f52"></div>
 <div class="a sw" style="left:62px;top:537px;background:#3e5236"></div>
 <div class="a sw" style="left:116px;top:537px;background:#5a4630"></div>
 <div class="a sw" style="left:170px;top:537px;background:#5b5b5b"></div>
 <div class="a sw" style="left:224px;top:537px;background:#553636"></div>
 <div class="a sw" style="left:8px;top:573px;background:#2c3f52"></div>
 <div class="a sw" style="left:62px;top:573px;background:#3e5236"></div>
 <div class="a sw" style="left:116px;top:573px;background:#5a4630"></div>
 <div class="a sw" style="left:170px;top:573px;background:#5b5b5b"></div>
 <div class="a sw" style="left:224px;top:573px;background:#553636"></div>
 <div class="a" style="left:282px;top:0;width:16px;height:575px;background:#171717"></div>
 <div class="a" style="left:286px;top:16px;width:8px;height:470px;background:#9a9a9a"></div>
</div>

<!-- bottom -->
<div class="a bl" style="left:599px;top:639px;width:1268px;height:1px"></div>
<div class="a" style="left:599px;top:640px;width:1268px;height:26px;background:#0c0c0c">
 <svg class="a" style="left:10px;top:9px" width="13" height="11"><path d="M0.5 0.5H12.5L6.5 10.5Z" fill="#e8e8e8"/></svg>
 <div class="a" style="left:32px;top:7px;font-size:12px;color:#e8e8e8;white-space:nowrap">Beat Shelf (0)</div>
</div>
<div class="a bl" style="left:599px;top:666px;width:1268px;height:1px"></div>
<div class="a" style="left:599px;top:667px;width:1268px;height:34px;background:#1c1c1c">
 <div class="a" style="left:8px;top:11px;font-size:12px;font-style:italic;color:#9a9a9a;white-space:nowrap">Double-click a beat node to move it to the shelf</div>
</div>
<div class="a bl" style="left:599px;top:701px;width:1268px;height:1px"></div>
<div class="a" style="left:599px;top:702px;width:1268px;height:17px;background:#000"></div>
<div class="a bl" style="left:599px;top:719px;width:1268px;height:1px"></div>
<div class="a" style="left:599px;top:720px;width:1268px;height:36px;background:#1c1c1c">
 <div class="a tbtn" style="left:8px;top:4px"><svg width="30" height="26" viewBox="0 0 30 26"><path d="M10 11h1.6v7H10zM11.6 14.5L16 11v7zM16 14.5L20.4 11v7z" fill="#e8e8e8"/></svg></div>
 <div class="a tbtn" style="left:48px;top:4px"><svg width="30" height="26" viewBox="0 0 30 26"><path d="M11 8.5L20 14L11 19.5Z" fill="#f2f2f2"/></svg></div>
 <div class="a tbtn" style="left:88px;top:4px"><svg width="30" height="26" viewBox="0 0 30 26"><path d="M9.6 11L14 14.5L9.6 18zM14 11L18.4 14.5L14 18zM18.4 11h1.6v7h-1.6z" fill="#e8e8e8"/></svg></div>
 <div class="a mono" style="left:128px;top:12px;font-size:12.85px;font-weight:bold;color:#f2f2f2;white-space:pre">00:01:18 / 00:32:06</div>
 <div class="a tbtn" style="left:1155px;top:4px;width:31px;font-size:13px;line-height:25px;text-align:center;color:#e8e8e8">&#8211;</div>
 <div class="a tbtn" style="left:1191px;top:4px;width:34px;text-align:center"><svg width="32" height="26" viewBox="0 0 32 26"><path d="M8 13H24M8 13l3-2.5M8 13l3 2.5M24 13l-3-2.5M24 13l-3 2.5" stroke="#e8e8e8" stroke-width="1.3" fill="none"/></svg></div>
 <div class="a tbtn" style="left:1230px;top:4px;width:31px;font-size:13px;line-height:25px;text-align:center;color:#e8e8e8">+</div>
</div>
<div class="a bl" style="left:599px;top:756px;width:1268px;height:1px"></div>
<div class="a" id="ruler" style="left:599px;top:757px;width:1268px;height:23px;background:#0c0c0c;overflow:hidden"><div class="a bl" style="left:6px;top:0;width:1px;height:23px"></div><div class="a rl" style="left:11px">9s</div><div class="a bl" style="left:56px;top:0;width:1px;height:23px"></div><div class="a rl" style="left:61px">10s</div><div class="a bl" style="left:106px;top:0;width:1px;height:23px"></div><div class="a rl" style="left:111px">11s</div><div class="a bl" style="left:156px;top:0;width:1px;height:23px"></div><div class="a rl" style="left:161px">12s</div><div class="a bl" style="left:206px;top:0;width:1px;height:23px"></div><div class="a rl" style="left:211px">13s</div><div class="a bl" style="left:256px;top:0;width:1px;height:23px"></div><div class="a rl" style="left:261px">14s</div><div class="a bl" style="left:306px;top:0;width:1px;height:23px"></div><div class="a rl" style="left:311px">15s</div><div class="a bl" style="left:356px;top:0;width:1px;height:23px"></div><div class="a rl" style="left:361px">16s</div><div class="a bl" style="left:406px;top:0;width:1px;height:23px"></div><div class="a rl" style="left:411px">17s</div><div class="a bl" style="left:456px;top:0;width:1px;height:23px"></div><div class="a rl" style="left:461px">18s</div><div class="a bl" style="left:506px;top:0;width:1px;height:23px"></div><div class="a rl" style="left:511px">19s</div><div class="a bl" style="left:556px;top:0;width:1px;height:23px"></div><div class="a rl" style="left:561px">20s</div><div class="a bl" style="left:606px;top:0;width:1px;height:23px"></div><div class="a rl" style="left:611px">21s</div><div class="a bl" style="left:656px;top:0;width:1px;height:23px"></div><div class="a rl" style="left:661px">22s</div><div class="a bl" style="left:706px;top:0;width:1px;height:23px"></div><div class="a rl" style="left:711px">23s</div><div class="a bl" style="left:756px;top:0;width:1px;height:23px"></div><div class="a rl" style="left:761px">24s</div><div class="a bl" style="left:806px;top:0;width:1px;height:23px"></div><div class="a rl" style="left:811px">25s</div><div class="a bl" style="left:856px;top:0;width:1px;height:23px"></div><div class="a rl" style="left:861px">26s</div><div class="a bl" style="left:906px;top:0;width:1px;height:23px"></div><div class="a rl" style="left:911px">27s</div><div class="a bl" style="left:956px;top:0;width:1px;height:23px"></div><div class="a rl" style="left:961px">28s</div><div class="a bl" style="left:1006px;top:0;width:1px;height:23px"></div><div class="a rl" style="left:1011px">29s</div><div class="a bl" style="left:1056px;top:0;width:1px;height:23px"></div><div class="a rl" style="left:1061px">30s</div><div class="a bl" style="left:1106px;top:0;width:1px;height:23px"></div><div class="a rl" style="left:1111px">31s</div><div class="a bl" style="left:1156px;top:0;width:1px;height:23px"></div><div class="a rl" style="left:1161px">32s</div><div class="a bl" style="left:1206px;top:0;width:1px;height:23px"></div><div class="a rl" style="left:1211px">33s</div><div class="a bl" style="left:1306px;top:0;width:1px;height:23px"></div><div class="a rl" style="left:1311px">35s</div></div>
<div class="a bl" style="left:599px;top:780px;width:1268px;height:1px"></div>
<div class="a" id="tracks" style="left:599px;top:781px;width:1268px;height:102px;background:#2a2a2a;overflow:hidden;border-bottom:1px solid #1a1a1a">
 <div class="a clip" style="left:-150px;width:302px"><span style="position:absolute;right:83px">Wingman Down (2)</span></div>
 <div class="a clip" style="left:154px;width:169px">Near miss</div>
 <div class="a clip" style="left:325px;width:148px">Enemy Plane Interior</div>
 <div class="a clip" style="left:475px;width:156px">Wingman Down</div>
 <div class="a clip" style="left:633px;width:131px">Teasing</div>
 <div class="a clip" style="left:766px;width:148px">New Beat 2</div>
 <div class="a clip" style="left:916px;width:101px;background:#98673a">Wingman Down...</div>
 <div class="a clip" style="left:1019px;width:148px">New Beat</div>
</div>
</body></html>
